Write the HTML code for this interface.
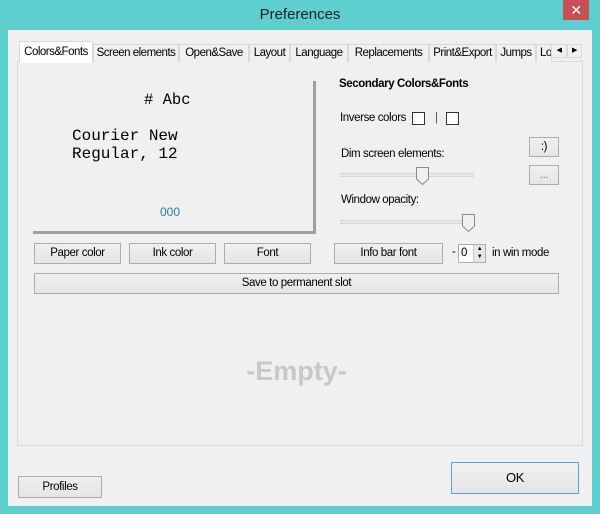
<!DOCTYPE html><html><head><style>
*{box-sizing:border-box;margin:0;padding:0}
body{width:600px;height:514px;background:#5ecfcf;font-family:"Liberation Sans",sans-serif;font-size:11.5px;color:#000;position:relative;overflow:hidden;letter-spacing:-0.4px}
.a{position:absolute}
.client{left:8px;top:30px;width:584px;height:476px;background:#f0f0f0}
.tab{position:absolute;top:44px;height:18px;border:1px solid #d9d9d9;border-bottom:none;background:#f0f0f0;text-align:center;line-height:16px;font-size:11.5px;white-space:nowrap;overflow:hidden;letter-spacing:-0.5px}
.btn{position:absolute;border:1px solid #acacac;background:linear-gradient(#f0f0f0,#e5e5e5);text-align:center;font-size:11.5px}
.chk{position:absolute;width:13px;height:13px;border:1px solid #333;background:#fff}
.track{position:absolute;height:4px;border:1px solid #d6d6d6;background:#e7e7e7}
</style></head><body>
<div class="a" style="left:0;top:6px;width:600px;text-align:center;font-size:15px;color:#222;letter-spacing:0">Preferences</div>
<div class="a" style="left:563px;top:0;width:26px;height:20px;background:#c75050;color:#fff;text-align:center;font-size:14px;line-height:20px">✕</div>
<div class="a client"></div>
<div class="a" style="left:17px;top:61px;width:566px;height:385px;border:1px solid #d9d9d9;background:#f0f0f0"></div>
<div class="tab" style="left:93px;width:86px">Screen elements</div>
<div class="tab" style="left:179px;width:70px">Open&amp;Save</div>
<div class="tab" style="left:249px;width:41px">Layout</div>
<div class="tab" style="left:290px;width:58px">Language</div>
<div class="tab" style="left:348px;width:81px">Replacements</div>
<div class="tab" style="left:429px;width:67px">Print&amp;Export</div>
<div class="tab" style="left:496px;width:40px">Jumps</div>
<div class="tab" style="left:536px;width:16px;text-align:left;padding-left:3px">Lo</div>
<div class="tab" style="left:551px;width:16px;height:14px;border:1px solid #d9d9d9;font-size:7px;line-height:12px">◀</div>
<div class="tab" style="left:567px;width:15px;height:14px;border:1px solid #d9d9d9;font-size:7px;line-height:12px">▶</div>
<div class="a" style="left:19px;top:41px;width:74px;height:22px;background:#fff;border:1px solid #d9d9d9;border-bottom:none;text-align:center;line-height:20px;letter-spacing:-0.5px">Colors&amp;Fonts</div>

<div class="a" style="left:33px;top:81px;width:283px;height:153px;border-right:3px solid #a0a0a0;border-bottom:3px solid #a0a0a0;background:#f0f0f0"></div>
<div class="a" style="left:144px;top:91px;font-family:'Liberation Mono',monospace;font-size:15.5px;letter-spacing:0">#&nbsp;Abc</div>
<div class="a" style="left:72px;top:127px;font-family:'Liberation Mono',monospace;font-size:16px;line-height:18px;letter-spacing:0">Courier New<br>Regular, 12</div>
<div class="a" style="left:160px;top:205px;color:#2a7ab0;font-size:12px;letter-spacing:0">000</div>

<div class="a" style="left:339px;top:78px;font-weight:bold">Secondary Colors&amp;Fonts</div>
<div class="a" style="left:340px;top:112px">Inverse colors</div>
<div class="chk" style="left:412px;top:112px"></div>
<div class="a" style="left:435px;top:112px;color:#555">|</div>
<div class="chk" style="left:446px;top:112px"></div>
<div class="btn" style="left:529px;top:137px;width:30px;height:20px;line-height:18px">:)</div>
<div class="btn" style="left:529px;top:165px;width:30px;height:20px;line-height:18px;color:#777">...</div>
<div class="a" style="left:341px;top:148px">Dim screen elements:</div>
<div class="track" style="left:340px;top:173px;width:134px"></div>
<svg class="a" style="left:416px;top:167px" width="13" height="18"><path d="M0.5 0.5H12.5V12L6.5 17.5L0.5 12Z" fill="#f0f0f0" stroke="#8a8a8a"/></svg>
<div class="a" style="left:341px;top:194px">Window opacity:</div>
<div class="track" style="left:340px;top:220px;width:134px"></div>
<svg class="a" style="left:462px;top:214px" width="13" height="18"><path d="M0.5 0.5H12.5V12L6.5 17.5L0.5 12Z" fill="#f0f0f0" stroke="#8a8a8a"/></svg>

<div class="btn" style="left:34px;top:243px;width:87px;height:21px;line-height:19px">Paper color</div>
<div class="btn" style="left:129px;top:243px;width:87px;height:21px;line-height:19px">Ink color</div>
<div class="btn" style="left:224px;top:243px;width:87px;height:21px;line-height:19px">Font</div>
<div class="btn" style="left:334px;top:243px;width:109px;height:21px;line-height:19px">Info bar font</div>
<div class="a" style="left:452px;top:246px">-</div>
<div class="a" style="left:458px;top:244px;width:28px;height:19px;border:1px solid #abadb3;background:#fff"><span style="position:absolute;left:2px;top:2px">0</span><div style="position:absolute;right:0;top:0;width:12px;height:17px;background:#e6e6e6;border-left:1px solid #ccc;font-size:6px;line-height:8px;text-align:center">▲<br>▼</div></div>
<div class="a" style="left:492px;top:247px">in win mode</div>
<div class="btn" style="left:34px;top:273px;width:525px;height:21px;line-height:19px">Save to permanent slot</div>

<div class="a" style="left:0;top:356px;width:593px;text-align:center;font-size:27px;font-weight:bold;color:#c8c8c8;letter-spacing:0">-Empty-</div>

<div class="btn" style="left:18px;top:476px;width:84px;height:22px;line-height:20px">Profiles</div>
<div class="btn" style="left:451px;top:462px;width:128px;height:32px;line-height:30px;border:1px solid #5c9fdc;font-size:13px">OK</div>
</body></html>
